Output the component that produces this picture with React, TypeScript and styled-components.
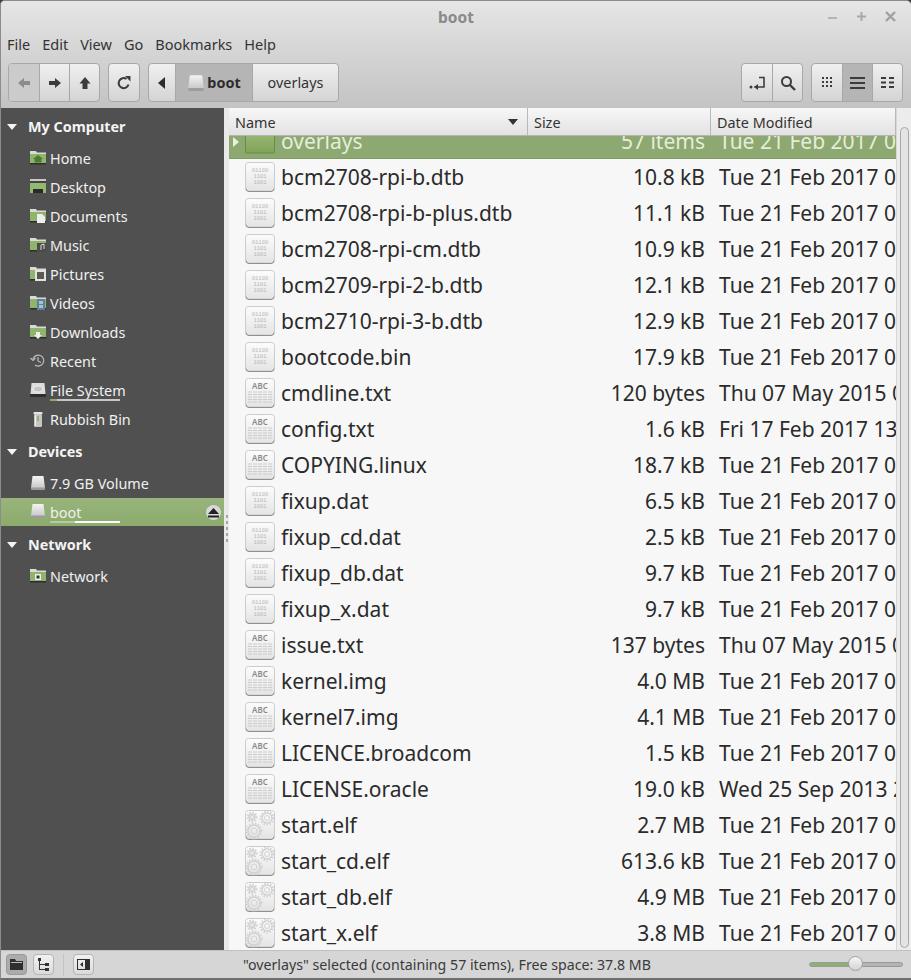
import React from "react";
import styled, { createGlobalStyle } from "styled-components";

const Global = createGlobalStyle`
  html, body { margin: 0; padding: 0; background: #3c3c3c; }
  body { font-family: "Noto Sans", sans-serif; overflow: hidden; }
  * { box-sizing: border-box; }
`;

const Win = styled.div`
  width: 911px; height: 980px; display: flex; flex-direction: column; overflow: hidden;
  border-radius: 5px 5px 0 0; background: #d6d6d6;
  border: 1px solid #8c8c8c; border-bottom: 2px solid #6e6e6e; border-right: none;
`;
const Top = styled.div`
  height: 107px; flex: none; display: flex; flex-direction: column;
  background: linear-gradient(#e6e6e6, #d9d9d9 35%, #c3c3c3);
`;
const TitleBar = styled.div`
  height: 32px; flex: none; display: flex; align-items: center; justify-content: center; position: relative;
  font-size: 15.5px; font-weight: 700; color: #8a8a8a;
`;
const WinControls = styled.div`
  position: absolute; right: 14px; top: 9px; display: flex; gap: 16px;
`;
const MenuBar = styled.div`
  height: 23px; flex: none; display: flex; align-items: center; padding: 0 0 2px 6px; gap: 12px;
  font-size: 14.5px; color: #333;
`;
const ToolBar = styled.div`
  flex: 1; display: flex; align-items: flex-start; padding: 7px 8px 0 7px; gap: 8px;
`;
const Group = styled.div`
  display: flex; height: 39px; border: 1px solid #a8a8a8; border-radius: 4px; overflow: hidden;
  background: linear-gradient(#f0f0f0, #d4d4d4);
`;
const Tool = styled.div<{ $w: number; $on?: boolean; $off?: boolean }>`
  width: ${p => p.$w}px; display: flex; align-items: center; justify-content: center; gap: 2px;
  font-size: 14.4px; color: #333;
  background: ${p => (p.$on ? "#b5b5b5" : p.$off ? "#cbcbcb" : "none")};
  & + & { border-left: 1px solid #a8a8a8; }
`;
const Spacer = styled.div`flex: 1;`;
const BoldText = styled.span`font-weight: 700; color: #2c2c2c;`;

const Main = styled.div`flex: 1; min-height: 0; display: flex;`;
const Sidebar = styled.div`
  width: 223px; flex: none; background: #505050; padding-top: 1px; color: #f0f0f0; font-size: 14.4px;
`;
const Heading = styled.div`
  height: 35px; display: flex; align-items: center; gap: 11px; padding-left: 6px; font-weight: 700; color: #f4f4f4;
`;
const Item = styled.div<{ $on?: boolean; $h?: number }>`
  height: ${p => p.$h ?? 29}px; display: flex; align-items: center; gap: 0; padding-left: 29px; position: relative;
  background: ${p => (p.$on ? "linear-gradient(#98b47c, #8cab6c)" : "none")};
  margin-bottom: ${p => (p.$on ? 1 : 0)}px;
`;
const ItemIcon = styled.div`width: 20px; height: 18px; flex: none; display: flex;`;
const Usage = styled.div<{ $on?: boolean }>`
  position: absolute; left: 49px; width: 70px; bottom: ${p => (p.$on ? 3 : 4)}px; height: 2px;
  background: ${p => (p.$on ? "#fff" : "#c8c8c8")};
`;
const UsageFill = styled.div<{ $on?: boolean }>`
  height: 100%; background: ${p => (p.$on ? "#b4cb9c" : "#8cab6c")};
`;
const Eject = styled.div`
  position: absolute; right: 3px; top: 7px; width: 15px; height: 15px; border-radius: 50%;
  background: #d8d8d8; display: flex; align-items: center; justify-content: center;
`;
const Gutter = styled.div`
  width: 5px; flex: none; background: #e9e9e9; display: flex; flex-direction: column; align-items: center;
  justify-content: center; gap: 3px; padding-bottom: 2px; margin-top: 0;
`;
const Dot = styled.div`width: 2px; height: 3px; background: #a5a5a5;`;
const Tree = styled.div`flex: 1; min-width: 0; display: flex; flex-direction: column; background: #f7f7f7;`;
const Header = styled.div`
  height: 28px; flex: none; display: grid; grid-template-columns: 299px 183px 185px; font-size: 14.4px; color: #333;
  border-bottom: 1px solid #b4b4b4;
`;
const HeadCell = styled.div`
  display: flex; align-items: center; justify-content: space-between; padding: 1px 9px 0 6px;
  background: linear-gradient(#f7f7f7, #e2e2e2); border-right: 1px solid #b8b8b8;
`;
const Body = styled.div`flex: 1; min-height: 0; display: flex;`;
const ListClip = styled.div`width: 667px; flex: none; overflow: hidden;`;
const List = styled.div`margin-top: -13px;`;
const Row = styled.div<{ $on?: boolean }>`
  height: 36px; display: grid; grid-template-columns: 298px 184px 185px; align-items: center; font-size: 21px;
  color: ${p => (p.$on ? "#e4eeda" : "#2b2b2b")};
  background: ${p => (p.$on ? "#8da870" : "none")};
  border-bottom: ${p => (p.$on ? "1px solid #7f9a63" : "none")};
`;
const NameCell = styled.div`display: flex; align-items: center; padding-left: 16px; gap: 6px; position: relative; white-space: nowrap;`;
const Expander = styled.div`
  position: absolute; left: 4px; top: 11px; width: 0; height: 0;
  border-left: 6px solid #e8f0de; border-top: 5px solid transparent; border-bottom: 5px solid transparent;
`;
const SizeCell = styled.div`text-align: right; padding-right: 6px; white-space: nowrap;`;
const DateCell = styled.div`padding-left: 8px; white-space: nowrap; overflow: hidden;`;
const Scrollbar = styled.div`
  width: 15px; flex: none; background: #ececec; border-left: 1px solid #d8d8d8; padding: 0 2px 2px 3px;
  margin-top: -28px; padding-top: 19px;
`;
const Thumb = styled.div`height: 100%; border: 1px solid #a8a8a8; border-radius: 5px; background: #e4e4e4;`;
const Status = styled.div`
  height: 28px; flex: none; display: flex; align-items: center; background: #d6d6d6; border-top: 1px solid #c0c0c0;
  padding-left: 5px; font-size: 14.2px; color: #3a3a3a; position: relative;
`;
const SmallBtn = styled.div<{ $on?: boolean }>`
  width: 21px; height: 21px; border-radius: 4px; display: flex; align-items: center; justify-content: center;
  border: 1px solid ${p => (p.$on ? "#9a9a9a" : "#b4b4b4")};
  background: ${p => (p.$on ? "#ababab" : "linear-gradient(#f2f2f2, #dadada)")};
  margin-right: 6px;
`;
const VSep = styled.div`width: 1px; height: 22px; background: #c4c4c4; margin: 0 9px 0 3px;`;
const StatusText = styled.div`margin-left: 143px; flex: 1; white-space: nowrap;`;
const Slider = styled.div`width: 94px; height: 5px; border-radius: 3px; background: #b4b4b4; border: 1px solid #9a9a9a; margin-right: 8px; position: relative;`;
const SliderFill = styled.div`height: 100%; width: 46px; background: #8fae72; border-radius: 3px;`;
const SliderThumb = styled.div`
  position: absolute; left: 38px; top: -7px; width: 15px; height: 15px; border-radius: 50%;
  background: linear-gradient(#f5f5f5, #d4d4d4); border: 1px solid #a0a0a0;
`;

const D = "#3c3c3c";
const Back = ({ c = D }: { c?: string }) => (
  <svg width="14" height="14" viewBox="0 0 14 14"><path d="M1 7l6-5v3h6v4H7v3z" fill={c} /></svg>
);
const Fwd = () => (
  <svg width="14" height="14" viewBox="0 0 14 14"><path d="M13 7L7 2v3H1v4h6v3z" fill={D} /></svg>
);
const Up = () => (
  <svg width="14" height="14" viewBox="0 0 14 14"><path d="M7 1l5.500 6.500H9.500V13h-5V7.500H1.500z" fill={D} /></svg>
);
const Reload = () => (
  <svg width="16" height="16" viewBox="0 0 16 16">
    <path d="M12.500 9.500A5 5 0 1 1 10.500 4" fill="none" stroke={D} strokeWidth="2" />
    <path d="M9 1h5.500v5.500z" fill={D} />
  </svg>
);
const Tri = () => <svg width="8" height="12" viewBox="0 0 8 12"><path d="M7 0v12L0 6z" fill="#2c2c2c" /></svg>;
const Drive = ({ w = 16, h = 16 }: { w?: number; h?: number }) => (
  <svg width={w} height={h} viewBox="0 0 16 16">
    <defs><linearGradient id="dg" x1="0" y1="0" x2="0" y2="1"><stop offset="0" stopColor="#f4f4f4" /><stop offset="1" stopColor="#c8c8c8" /></linearGradient></defs>
    <path d="M2.500 1h11l1.500 12H1z" fill="url(#dg)" />
    <rect x="1" y="12.500" width="14" height="2.500" rx="1" fill="#9c9c9c" />
  </svg>
);
const Bookmark = () => (
  <svg width="17" height="14" viewBox="0 0 17 14">
    <circle cx="2" cy="11" r="1.500" fill={D} /><circle cx="6" cy="11" r="0.800" fill={D} />
    <path d="M10 1.500h5V11H8" fill="none" stroke={D} strokeWidth="1.600" />
    <path d="M9 8v6l-4-3z" fill={D} />
  </svg>
);
const Search = () => (
  <svg width="16" height="16" viewBox="0 0 16 16">
    <circle cx="6.500" cy="6.500" r="4.500" fill="none" stroke={D} strokeWidth="2" />
    <path d="M10 10l5 5" stroke={D} strokeWidth="2.400" />
  </svg>
);
const GridIcon = () => (
  <svg width="11" height="11" viewBox="0 0 11 11" fill={D}>
    {[0, 4, 8].flatMap(x => [0, 4, 8].map(y => <rect key={`${x}${y}`} x={x} y={y} width="2" height="2" />))}
  </svg>
);
const ListIcon = () => (
  <svg width="15" height="12" viewBox="0 0 15 12" fill={D}><rect width="15" height="2" /><rect y="5" width="15" height="2" /><rect y="10" width="15" height="2" /></svg>
);
const CompactIcon = () => (
  <svg width="13" height="11" viewBox="0 0 13 11" fill={D}>
    <rect width="5" height="2" /><rect x="8" width="5" height="2" /><rect y="4.500" width="5" height="2" /><rect x="8" y="4.500" width="5" height="2" /><rect y="9" width="5" height="2" /><rect x="8" y="9" width="5" height="2" />
  </svg>
);

const SideFolder = ({ children, dark }: { children?: React.ReactNode; dark?: boolean }) => (
  <svg width="16" height="15" viewBox="0 0 16 15">
    <path d="M0 1h6l1 1.500h9V14H0z" fill="#dadada" />
    <rect x="0" y="4" width="16" height="10" fill={dark ? "#8db06a" : "#8fb56c"} />
    <rect x="0" y="13" width="16" height="1.500" fill="#2e2e2e" />
    {children}
  </svg>
);
const icons: Record<string, React.ReactNode> = {
  home: <SideFolder><path d="M8 5l5 4h-1.500v3.500h-7V9H3z" fill="#4f7a34" /></SideFolder>,
  desktop: (
    <svg width="16" height="15" viewBox="0 0 16 15">
      <rect width="16" height="2" fill="#c8c8c8" /><rect y="2" width="16" height="2" fill="#444" /><rect y="4" width="16" height="10" fill="#93b96f" />
      <rect x="3" y="10" width="10" height="4" fill="#2a2a2a" />
    </svg>
  ),
  docs: <SideFolder><path d="M7 6h5l3 3v6H7z" fill="#eee" /></SideFolder>,
  music: <SideFolder><rect x="7" y="6" width="9" height="9" fill="#4a4a4a" /><path d="M11 13V8l3-1v5" stroke="#ddd" fill="none" /></SideFolder>,
  pics: <SideFolder><rect x="5" y="4" width="11" height="11" fill="#e2e2e2" /><rect x="7" y="6" width="7" height="7" fill="#5a5a50" /></SideFolder>,
  videos: <SideFolder><rect x="7" y="4" width="8" height="11" fill="#5f7f96" /><rect x="9" y="6" width="4" height="3" fill="#a9c1d2" /><rect x="9" y="10" width="4" height="3" fill="#a9c1d2" /></SideFolder>,
  downloads: <SideFolder><path d="M6 8h4v3h2l-4 4-4-4h2z" fill="#eee" /></SideFolder>,
  recent: (
    <svg width="16" height="15" viewBox="0 0 16 15" fill="none" stroke="#bcbcbc" strokeWidth="1.200">
      <path d="M3 6a5.500 5.500 0 1 1 2 6" /><path d="M0.500 5l2.500 2.500L5.500 5" /><path d="M8 4v4l3 1.500" />
    </svg>
  ),
  fs: (
    <svg width="16" height="16" viewBox="0 0 16 16">
      <path d="M1.500 1h13l1 11H.5z" fill="#dcdcdc" /><ellipse cx="8" cy="7" rx="4.500" ry="3" fill="#c4c4c4" stroke="#eee" />
      <rect y="12" width="16" height="3" rx="1" fill="#2e2e2e" />
    </svg>
  ),
  trash: (
    <svg width="16" height="17" viewBox="0 0 16 17">
      <rect x="3.500" y="1" width="9" height="2.500" rx="1" fill="#e6e6e6" /><rect x="4" y="3" width="8" height="13" rx="1.500" fill="#c6c6c6" />
      <rect x="7" y="5" width="2" height="5" fill="#8fb56c" /><rect x="5" y="4" width="1" height="11" fill="#eee" />
    </svg>
  ),
  drive: <Drive />,
  network: <SideFolder><rect x="5" y="6" width="6" height="6" fill="#eee" /><rect x="6.500" y="7.500" width="3" height="3" fill="#333" /></SideFolder>,
};

const FileBase = ({ children }: { children: React.ReactNode }) => (
  <svg width="30" height="30" viewBox="0 0 30 30" style={{ flex: "none" }}>
    <defs><linearGradient id="fb" x1="0" y1="0" x2="0" y2="1"><stop offset="0" stopColor="#fcfcfc" /><stop offset="1" stopColor="#e4e4e4" /></linearGradient></defs>
    <rect x="0.500" y="0.500" width="29" height="28.500" rx="3" fill="url(#fb)" stroke="#cccccc" />
    <path d="M1 26.500q0 3 3 3h22q3 0 3-3" fill="none" stroke="#8f8f8f" strokeWidth="1" />
    {children}
  </svg>
);
const BinIcon = () => (
  <FileBase>
    <text x="15" y="10" textAnchor="middle" fontSize="5.500" fontFamily="Liberation Mono" fill="#b8b8b8">01100</text>
    <text x="15" y="16" textAnchor="middle" fontSize="5.500" fontFamily="Liberation Mono" fill="#b8b8b8">1101</text>
    <text x="15" y="22" textAnchor="middle" fontSize="5.500" fontFamily="Liberation Mono" fill="#b8b8b8">1001</text>
  </FileBase>
);
const TxtIcon = () => (
  <FileBase>
    <text x="15" y="10.500" textAnchor="middle" fontSize="8" fontWeight="600" fontFamily="Noto Sans" fill="#8a8a8a">ABC</text>
    {[14, 16.500, 19, 21.500, 24].map(y => (
      <line key={y} x1="3" x2="27" y1={y} y2={y} stroke="#cccccc" strokeWidth="1" strokeDasharray="4 1" />
    ))}
  </FileBase>
);
const Gear = ({ x, y, r }: { x: number; y: number; r: number }) => (
  <g fill="none" stroke="#d2d2d2">
    <circle cx={x} cy={y} r={r} strokeWidth="1.500" />
    <circle cx={x} cy={y} r={r + 1.500} strokeWidth="2" strokeDasharray="1.500 1.500" />
    <circle cx={x} cy={y} r={r * 0.5} strokeWidth="1" />
  </g>
);
const ElfIcon = () => (
  <FileBase>
    <Gear x={9} y={21} r={6} /><Gear x={22} y={8} r={5} /><Gear x={7} y={7} r={3} />
  </FileBase>
);
const FolderBig = () => (
  <svg width="30" height="30" viewBox="0 0 30 30" style={{ flex: "none" }}>
    <defs><linearGradient id="fg" x1="0" y1="0" x2="0" y2="1"><stop offset="0" stopColor="#a3c27e" /><stop offset="1" stopColor="#7fa259" /></linearGradient></defs>
    <rect x="0.500" y="0" width="29" height="27" rx="1" fill="url(#fg)" stroke="#6a8a48" />
  </svg>
);

const files: [string, "b" | "t" | "e", string, string][] = [
  ["bcm2708-rpi-b.dtb", "b", "10.8 kB", "Tue 21 Feb 2017 0"],
  ["bcm2708-rpi-b-plus.dtb", "b", "11.1 kB", "Tue 21 Feb 2017 0"],
  ["bcm2708-rpi-cm.dtb", "b", "10.9 kB", "Tue 21 Feb 2017 0"],
  ["bcm2709-rpi-2-b.dtb", "b", "12.1 kB", "Tue 21 Feb 2017 0"],
  ["bcm2710-rpi-3-b.dtb", "b", "12.9 kB", "Tue 21 Feb 2017 0"],
  ["bootcode.bin", "b", "17.9 kB", "Tue 21 Feb 2017 0"],
  ["cmdline.txt", "t", "120 bytes", "Thu 07 May 2015 0"],
  ["config.txt", "t", "1.6 kB", "Fri 17 Feb 2017 13"],
  ["COPYING.linux", "t", "18.7 kB", "Tue 21 Feb 2017 0"],
  ["fixup.dat", "b", "6.5 kB", "Tue 21 Feb 2017 0"],
  ["fixup_cd.dat", "b", "2.5 kB", "Tue 21 Feb 2017 0"],
  ["fixup_db.dat", "b", "9.7 kB", "Tue 21 Feb 2017 0"],
  ["fixup_x.dat", "b", "9.7 kB", "Tue 21 Feb 2017 0"],
  ["issue.txt", "t", "137 bytes", "Thu 07 May 2015 0"],
  ["kernel.img", "t", "4.0 MB", "Tue 21 Feb 2017 0"],
  ["kernel7.img", "t", "4.1 MB", "Tue 21 Feb 2017 0"],
  ["LICENCE.broadcom", "t", "1.5 kB", "Tue 21 Feb 2017 0"],
  ["LICENSE.oracle", "t", "19.0 kB", "Wed 25 Sep 2013 2"],
  ["start.elf", "e", "2.7 MB", "Tue 21 Feb 2017 0"],
  ["start_cd.elf", "e", "613.6 kB", "Tue 21 Feb 2017 0"],
  ["start_db.elf", "e", "4.9 MB", "Tue 21 Feb 2017 0"],
  ["start_x.elf", "e", "3.8 MB", "Tue 21 Feb 2017 0"],
];

const places: [string, string][] = [
  ["Home", "home"], ["Desktop", "desktop"], ["Documents", "docs"], ["Music", "music"],
  ["Pictures", "pics"], ["Videos", "videos"], ["Downloads", "downloads"], ["Recent", "recent"],
];

const HeadTri = () => <svg width="10" height="6" viewBox="0 0 10 6"><path d="M0 0h10L5 6z" fill="#f4f4f4" /></svg>;
const SortTri = () => <svg width="10" height="6" viewBox="0 0 10 6"><path d="M0 0h10L5 6z" fill="#333" /></svg>;

export default function App() {
  return (
    <>
      <Global />
      <Win>
        <Top>
          <TitleBar>
            boot
            <WinControls>
              <svg width="13" height="13" viewBox="0 0 13 13"><rect x="2" y="7" width="9" height="2" fill="#b4b4b4" /></svg>
              <svg width="13" height="13" viewBox="0 0 13 13"><path d="M5.500 2h2v3.500H11v2H7.500V11h-2V7.500H2v-2h3.500z" fill="#a8a8a8" /></svg>
              <svg width="13" height="13" viewBox="0 0 13 13"><path d="M2 2l9 9M11 2l-9 9" stroke="#a0a0a0" strokeWidth="2.400" /></svg>
            </WinControls>
          </TitleBar>
          <MenuBar>
            <span>File</span><span>Edit</span><span>View</span><span>Go</span><span>Bookmarks</span><span>Help</span>
          </MenuBar>
          <ToolBar>
            <Group>
              <Tool $w={30} $off><Back c="#8c8c8c" /></Tool>
              <Tool $w={30}><Fwd /></Tool>
              <Tool $w={30}><Up /></Tool>
            </Group>
            <Group><Tool $w={30}><Reload /></Tool></Group>
            <Group>
              <Tool $w={26}><Tri /></Tool>
              <Tool $w={77} $on><Drive w={18} h={18} /><BoldText>boot</BoldText></Tool>
              <Tool $w={86}>overlays</Tool>
            </Group>
            <Spacer />
            <Group>
              <Tool $w={30}><Bookmark /></Tool>
              <Tool $w={30}><Search /></Tool>
            </Group>
            <Group>
              <Tool $w={30}><GridIcon /></Tool>
              <Tool $w={30} $on><ListIcon /></Tool>
              <Tool $w={30}><CompactIcon /></Tool>
            </Group>
          </ToolBar>
        </Top>
        <Main>
          <Sidebar>
            <Heading><HeadTri />My Computer</Heading>
            {places.map(([l, k]) => (
              <Item key={l}><ItemIcon>{icons[k]}</ItemIcon>{l}</Item>
            ))}
            <Item><ItemIcon>{icons.fs}</ItemIcon>File System<Usage><UsageFill style={{ width: "10%" }} /></Usage></Item>
            <Item><ItemIcon>{icons.trash}</ItemIcon>Rubbish Bin</Item>
            <Heading><HeadTri />Devices</Heading>
            <Item><ItemIcon>{icons.drive}</ItemIcon>7.9 GB Volume</Item>
            <Item $on $h={28}>
              <ItemIcon>{icons.drive}</ItemIcon>boot
              <Usage $on><UsageFill $on style={{ width: "36%" }} /></Usage>
              <Eject>
                <svg width="11" height="10" viewBox="0 0 11 10"><path d="M5.500 0L11 6H0z" fill="#222" /><rect y="7.500" width="11" height="2" fill="#222" /></svg>
              </Eject>
            </Item>
            <Heading><HeadTri />Network</Heading>
            <Item><ItemIcon>{icons.network}</ItemIcon>Network</Item>
          </Sidebar>
          <Gutter>{[0, 1, 2, 3, 4].map(i => <Dot key={i} />)}</Gutter>
          <Tree>
            <Header>
              <HeadCell>Name<SortTri /></HeadCell>
              <HeadCell>Size</HeadCell>
              <HeadCell>Date Modified</HeadCell>
            </Header>
            <Body>
              <ListClip>
                <List>
                  <Row $on>
                    <NameCell><Expander /><FolderBig />overlays</NameCell>
                    <SizeCell>57 items</SizeCell>
                    <DateCell>Tue 21 Feb 2017 0</DateCell>
                  </Row>
                  {files.map(([n, t, s, d]) => (
                    <Row key={n}>
                      <NameCell>{t === "b" ? <BinIcon /> : t === "t" ? <TxtIcon /> : <ElfIcon />}{n}</NameCell>
                      <SizeCell>{s}</SizeCell>
                      <DateCell>{d}</DateCell>
                    </Row>
                  ))}
                </List>
              </ListClip>
              <Scrollbar><Thumb /></Scrollbar>
            </Body>
          </Tree>
        </Main>
        <Status>
          <SmallBtn $on>
            <svg width="13" height="11" viewBox="0 0 13 11"><path d="M0 0h5l1 2h7v9H0z" fill="#2e2e2e" /><rect x="1" y="3" width="11" height="1" fill="#bbb" /></svg>
          </SmallBtn>
          <SmallBtn>
            <svg width="13" height="13" viewBox="0 0 13 13" fill="#333"><rect x="1" y="0" width="3" height="3" /><rect x="2" y="3" width="1" height="9" /><rect x="2" y="6" width="6" height="1" /><rect x="2" y="11" width="6" height="1" /><rect x="8" y="5" width="4" height="3" /><rect x="8" y="10" width="4" height="3" /></svg>
          </SmallBtn>
          <VSep />
          <SmallBtn>
            <svg width="13" height="11" viewBox="0 0 13 11"><rect x="0.500" y="0.500" width="12" height="10" fill="none" stroke="#2e2e2e" /><rect x="8" y="1" width="4" height="9" fill="#2e2e2e" /><path d="M6 3v5L3 5.500z" fill="#2e2e2e" /></svg>
          </SmallBtn>
          <StatusText>"overlays" selected (containing 57 items), Free space: 37.8 MB</StatusText>
          <Slider><SliderFill /><SliderThumb /></Slider>
        </Status>
      </Win>
    </>
  );
}
